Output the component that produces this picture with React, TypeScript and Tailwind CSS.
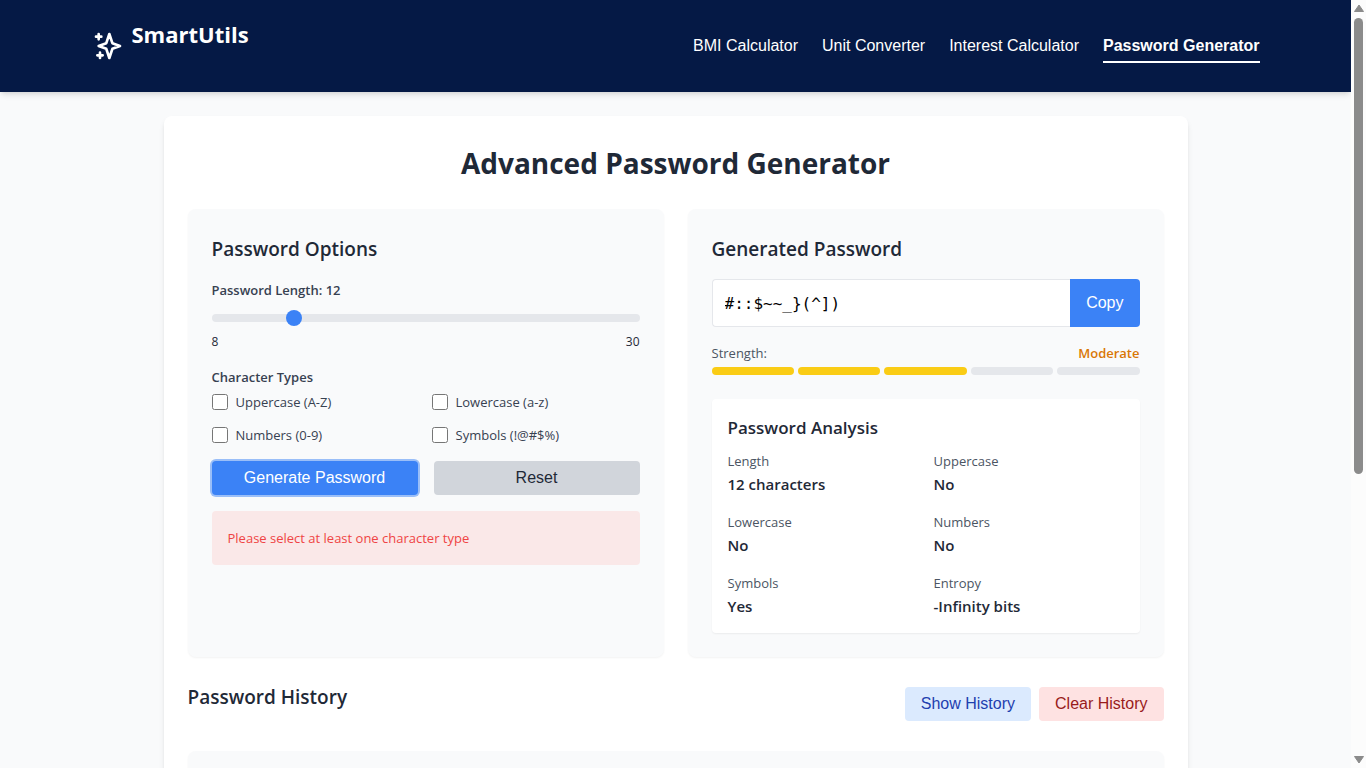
import { useState } from "react";

const navLinks = ["BMI Calculator", "Unit Converter", "Interest Calculator"];
const characterTypes = ["Uppercase (A-Z)", "Lowercase (a-z)", "Numbers (0-9)", "Symbols (!@#$%)"];
const analysis = [
  ["Length", "12 characters"],
  ["Uppercase", "No"],
  ["Lowercase", "No"],
  ["Numbers", "No"],
  ["Symbols", "Yes"],
  ["Entropy", "-Infinity bits"],
];

const buttonFont = "font-['Liberation_Sans',Arial,sans-serif] text-base leading-[18px]";
const panel = "rounded-lg bg-[#f9fafb] p-6 shadow-[0_1px_2px_rgba(0,0,0,0.05)]";
const heading = "text-[19px] leading-8 font-semibold text-[#1f2937]";

function Header() {
  return (
    <header className="relative bg-[#051945] shadow-md">
      <div className="mx-auto flex h-[92px] max-w-[1200px] items-center justify-between px-4">
        <a href="#home" className="flex items-center gap-2 text-white">
          <svg className="h-8 w-8" viewBox="0 0 24 24" fill="none" stroke="currentColor" strokeWidth="2" strokeLinecap="round" strokeLinejoin="round" aria-hidden="true">
            <path d="M5 3v4M3 5h4M6 17v4m-2-2h4m5-16l2.286 6.857L21 12l-5.714 2.143L13 21l-2.286-6.857L5 12l5.714-2.143L13 3z" />
          </svg>
          <span className="pb-6 text-[22px] leading-8 font-bold">SmartUtils</span>
        </a>
        <nav className="flex gap-6 font-['Liberation_Sans',Arial,sans-serif] text-base leading-[18px] text-white">
          {navLinks.map((link) => (
            <a key={link} href="#tools" className="border-b-2 border-transparent pt-2 pb-[6px]">
              {link}
            </a>
          ))}
          <a href="#password" aria-current="page" className="border-b-2 border-white pt-2 pb-[6px] font-bold">
            Password Generator
          </a>
        </nav>
      </div>
    </header>
  );
}

function Options() {
  const [length, setLength] = useState(12);
  return (
    <section className={panel}>
      <h2 className={`${heading} mb-[14px]`}>Password Options</h2>
      <label htmlFor="length" className="block text-[13px] leading-[22px] font-semibold text-[#374151]">
        Password Length: {length}
      </label>
      <input
        id="length"
        type="range"
        min={8}
        max={30}
        value={length}
        onChange={(event) => setLength(Number(event.target.value))}
        className="mt-[13px] block h-2 w-full appearance-none rounded-full bg-[#e5e7eb] [&::-webkit-slider-thumb]:h-4 [&::-webkit-slider-thumb]:w-4 [&::-webkit-slider-thumb]:appearance-none [&::-webkit-slider-thumb]:rounded-full [&::-webkit-slider-thumb]:bg-[#3b82f6]"
      />
      <div className="mt-[9px] flex justify-between text-xs leading-[22px] text-[#1f2937]">
        <span>8</span>
        <span>30</span>
      </div>
      <fieldset className="mt-[13px]">
        <legend className="text-[13px] leading-[22px] font-semibold text-[#374151]">Character Types</legend>
        <div className="mt-[3px] grid grid-cols-2 gap-x-3 gap-y-[11px]">
          {characterTypes.map((type) => (
            <label key={type} className="flex items-center gap-2 text-[13px] leading-[22px] text-[#374151]">
              <input type="checkbox" className="h-4 w-4" />
              {type}
            </label>
          ))}
        </div>
      </fieldset>
      <div className="mt-[15px] grid grid-cols-2 gap-4">
        <button type="button" className={`${buttonFont} rounded bg-[#3b82f6] py-2 text-white ring-2 ring-[#3b82f6]/50`}>
          Generate Password
        </button>
        <button type="button" className={`${buttonFont} rounded bg-[#d1d5db] py-2 text-[#1f2937]`}>
          Reset
        </button>
      </div>
      <p role="alert" className="mt-4 rounded bg-[#fae8e8] p-4 text-[13px] leading-[22px] text-[#ef4444]">
        Please select at least one character type
      </p>
    </section>
  );
}

function Result() {
  return (
    <section className={panel}>
      <h2 className={`${heading} mb-[14px]`}>Generated Password</h2>
      <div className="flex h-12">
        <input
          type="text"
          readOnly
          aria-label="Generated password"
          value="#::$~~_}(^])"
          className="min-w-0 flex-1 rounded-l border border-r-0 border-[#e5e7eb] bg-white px-3 pt-[2px] font-['DejaVu_Sans_Mono',monospace] text-base text-black"
        />
        <button type="button" className={`${buttonFont} rounded-r bg-[#3b82f6] px-4 text-white`}>
          Copy
        </button>
      </div>
      <div className="mt-[15px] flex justify-between text-[13px] leading-[22px]">
        <span className="text-[#4b5563]">Strength:</span>
        <span className="font-semibold text-[#d97706]">Moderate</span>
      </div>
      <div className="mt-[3px] grid grid-cols-5 gap-1">
        {[1, 2, 3, 4, 5].map((level) => (
          <div key={level} className={level <= 3 ? "h-2 rounded-full bg-[#facc15]" : "h-2 rounded-full bg-[#e5e7eb]"} />
        ))}
      </div>
      <div className="mt-6 rounded bg-white px-4 pt-4 pb-[15px] shadow-[0_1px_2px_rgba(0,0,0,0.06)]">
        <h3 className="text-[17px] leading-[26px] font-semibold text-[#1f2937]">Password Analysis</h3>
        <dl className="mt-[9px] grid grid-cols-2 gap-x-4 gap-y-[15px]">
          {analysis.map(([name, value]) => (
            <div key={name}>
              <dt className="text-[13px] leading-[22px] text-[#4b5563]">{name}</dt>
              <dd className="text-[15px] leading-6 font-semibold text-[#1f2937]">{value}</dd>
            </div>
          ))}
        </dl>
      </div>
    </section>
  );
}

function Scrollbar() {
  return (
    <div className="flex w-[15px] shrink-0 flex-col items-center justify-between bg-[#fcfcfc] py-1 text-[#8b8b8b]" aria-hidden="true">
      <svg className="h-2 w-[10px]" viewBox="0 0 10 8" fill="currentColor">
        <path d="M5 1 9.500 7.500H.5Z" stroke="currentColor" strokeLinejoin="round" />
      </svg>
      <div className="my-[6px] flex flex-1 flex-col">
        <div className="h-[62.3%] w-[9px] rounded-full bg-[#8b8b8b]" />
      </div>
      <svg className="h-2 w-[10px]" viewBox="0 0 10 8" fill="currentColor">
        <path d="M5 7 9.500 .5H.5Z" stroke="currentColor" strokeLinejoin="round" />
      </svg>
    </div>
  );
}

export default function App() {
  return (
    <div className="flex h-screen bg-[#f9fafb] font-['Open_Sans','Noto_Sans',sans-serif] text-[#1f2937]">
      <div className="min-w-0 flex-1 overflow-y-auto [scrollbar-width:none]">
        <Header />
        <main className="mx-auto my-6 max-w-5xl rounded-lg bg-white p-6 shadow-md">
          <h1 className="mb-[23px] text-center text-[28px] leading-[46px] font-bold text-[#1f2937]">Advanced Password Generator</h1>
          <div className="grid gap-6 md:grid-cols-2">
            <Options />
            <Result />
          </div>
          <div className="mt-6 flex items-center justify-between">
            <h2 className={`${heading} mb-[14px]`}>Password History</h2>
            <div className="flex gap-2">
              <button type="button" className={`${buttonFont} rounded bg-[#dbeafe] px-4 py-2 text-[#1e40af]`}>
                Show History
              </button>
              <button type="button" className={`${buttonFont} rounded bg-[#fee2e2] px-4 py-2 text-[#991b1b]`}>
                Clear History
              </button>
            </div>
          </div>
          <section aria-label="Security tips" className={`${panel} mt-6 min-h-[360px]`} />
        </main>
      </div>
      <Scrollbar />
    </div>
  );
}
